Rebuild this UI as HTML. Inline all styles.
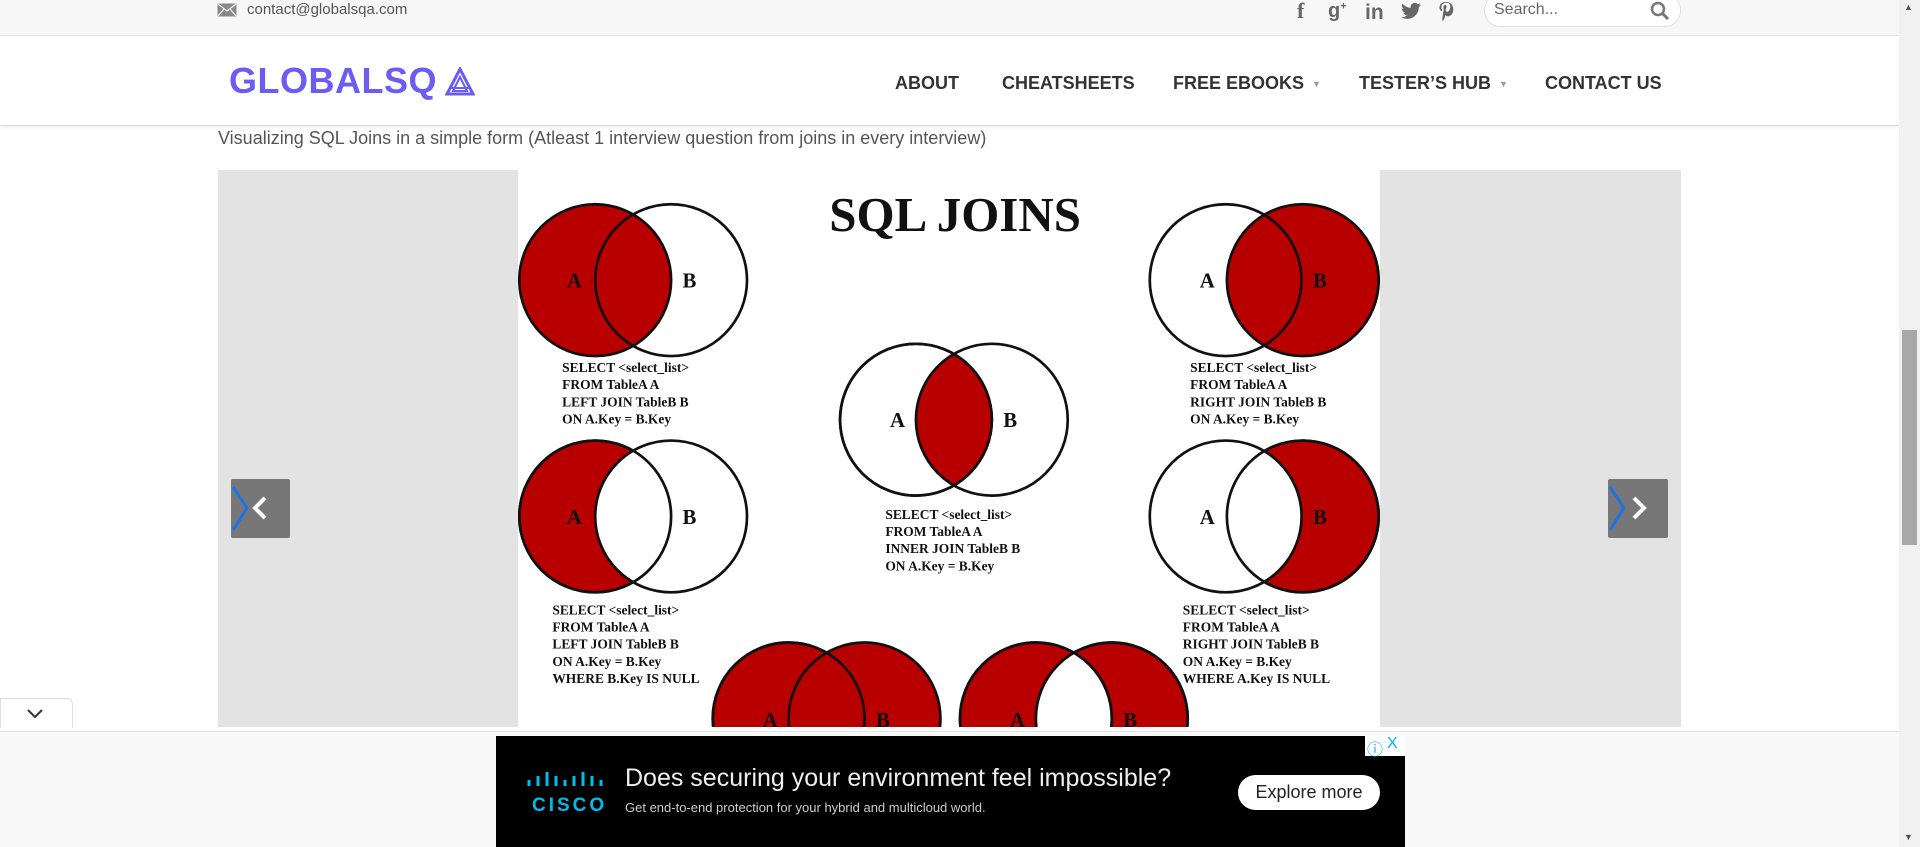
<!DOCTYPE html>
<html><head><meta charset="utf-8"><style>
*{margin:0;padding:0;box-sizing:border-box}
body{width:1920px;height:847px;overflow:hidden;background:#fff;font-family:"Liberation Sans",sans-serif;position:relative}
.abs{position:absolute}
#top{left:0;top:0;width:1899px;height:36px;background:#f7f7f7;border-bottom:1px solid #e6e6e6}
#hdr{left:0;top:36px;width:1899px;height:90px;background:#fff;border-bottom:1px solid #ddd;box-shadow:0 1px 3px rgba(0,0,0,.08)}
.nav{top:73px;font-size:18px;color:#333;font-weight:600;letter-spacing:0}
.caret{font-size:9px;color:#999;margin-left:8px;vertical-align:middle}
.sql{font-family:"Liberation Serif",serif;font-weight:bold;fill:#111}
</style></head><body>
<div id="top" class="abs"></div>
<svg class="abs" style="left:217px;top:3px" width="20" height="14" viewBox="0 0 20 14"><rect x="0.5" y="0.5" width="19" height="13" fill="#888"/><path d="M1 1 L10 8 L19 1 M1 13 L7 6 M19 13 L13 6" stroke="#f7f7f7" stroke-width="1.2" fill="none"/></svg>
<div class="abs" style="left:247px;top:1px;font-size:15px;color:#555">contact@globalsqa.com</div>
<div class="abs" style="left:1297px;top:-2px;font-size:22px;color:#666;font-weight:bold;font-family:'Liberation Serif',serif">f</div>
<div class="abs" style="left:1328px;top:0px;font-size:20px;color:#666;font-weight:bold">g<sup style="font-size:11px">+</sup></div>
<div class="abs" style="left:1365px;top:1px;font-size:21px;color:#666;font-weight:bold">in</div>
<svg class="abs" style="left:1400px;top:3px" width="22" height="18" viewBox="0 0 24 20"><path d="M23 2c-.8.4-1.7.6-2.6.7.9-.6 1.6-1.4 2-2.5-.9.5-1.900.9-2.9 1.1A4.5 4.5 0 0 0 11.8 5.4 12.8 12.8 0 0 1 2.5 0.7a4.5 4.5 0 0 0 1.4 6c-.7 0-1.4-.2-2-.6 0 2.2 1.6 4 3.6 4.4-.7.2-1.4.2-2 .1.6 1.8 2.2 3.1 4.2 3.1A9 9 0 0 1 1 15.6 12.8 12.8 0 0 0 20.7 4.8c.9-.7 1.7-1.500 2.3-2.8z" fill="#666"/></svg>
<svg class="abs" style="left:1438px;top:1px" width="16" height="21" viewBox="0 0 16 21"><path d="M8 1C3.5 1 1.5 4 1.5 6.5c0 1.6.6 3 1.9 3.5.2.1.4 0 .5-.3l.2-.8c.1-.3 0-.4-.2-.6-.4-.5-.6-1.1-.6-1.9 0-2.5 1.9-4.7 4.9-4.7 2.7 0 4.1 1.6 4.1 3.8 0 2.9-1.3 5.3-3.1 5.3-1 0-1.8-.8-1.5-1.9.3-1.3.9-2.6.9-3.5 0-.8-.4-1.4-1.3-1.4-1 0-1.9 1.1-1.9 2.5 0 .9.3 1.5.3 1.5L4.5 16c-.4 1.5-.1 3.5 0 4 .1.1.2.2.3 0 .1-.2 1.4-1.7 1.8-3.3l.7-2.7c.3.7 1.4 1.3 2.5 1.3 3.3 0 5.5-3 5.5-7C15.3 4.4 12.6 1 8 1z" fill="#666"/></svg>
<div class="abs" style="left:1484px;top:-6px;width:197px;height:33px;background:#fff;border:1px solid #e0e0e0;border-radius:16px"></div>
<div class="abs" style="left:1494px;top:1px;font-size:16px;color:#666">Search...</div>
<svg class="abs" style="left:1650px;top:1px" width="20" height="20" viewBox="0 0 20 20"><circle cx="8" cy="8" r="6" stroke="#777" stroke-width="2.5" fill="none"/><path d="M12.5 12.5 L18 18" stroke="#777" stroke-width="3"/></svg>

<div id="hdr" class="abs"></div>
<div class="abs" style="left:229px;top:60px;font-size:36px;font-weight:900;color:#6a5cf5;letter-spacing:0.5px">GLOBALSQ</div>
<svg class="abs" style="left:445px;top:67px" width="30" height="30" viewBox="0 0 30 30"><path d="M15 2 L28 27 L2 27 Z" fill="none" stroke="#6a5cf5" stroke-width="3"/><path d="M15 10 L22 24 L8 24 Z" fill="none" stroke="#6a5cf5" stroke-width="2"/><path d="M5 21 H25" stroke="#6a5cf5" stroke-width="2"/></svg>
<div class="abs nav" style="left:895px">ABOUT</div>
<div class="abs nav" style="left:1002px">CHEATSHEETS</div>
<div class="abs nav" style="left:1173px">FREE EBOOKS<span class="caret">▼</span></div>
<div class="abs nav" style="left:1359px">TESTER’S HUB<span class="caret">▼</span></div>
<div class="abs nav" style="left:1545px">CONTACT US</div>

<div class="abs" style="left:218px;top:128px;font-size:18px;color:#555">Visualizing SQL Joins in a simple form (Atleast 1 interview question from joins in every interview)</div>

<div class="abs" style="left:218px;top:170px;width:1463px;height:557px;background:#e3e3e3"></div>
<svg class="abs" style="left:518px;top:170px" width="862" height="557" viewBox="0 0 704 455">
<defs>
<clipPath id="cc"><circle cx="387" cy="204" r="62"/></clipPath>
<clipPath id="cb5"><circle cx="485" cy="448" r="62"/></clipPath>
</defs>
<rect width="704" height="455" fill="#fff"/>
<text x="357" y="50" text-anchor="middle" class="sql" font-size="40">SQL JOINS</text>
<g stroke="#111" stroke-width="2.2">
<circle cx="63" cy="90" r="62" fill="#b80000"/><circle cx="125" cy="90" r="62" fill="none"/>
<circle cx="641" cy="90" r="62" fill="#b80000"/><circle cx="578" cy="90" r="62" fill="none"/>
<circle cx="325" cy="204" r="62" fill="#fff"/><circle cx="325" cy="204" r="62" fill="#b80000" clip-path="url(#cc)" stroke="none"/><circle cx="325" cy="204" r="62" fill="none"/><circle cx="387" cy="204" r="62" fill="none"/>
<circle cx="63" cy="283" r="62" fill="#b80000"/><circle cx="125" cy="283" r="62" fill="#fff"/><circle cx="63" cy="283" r="62" fill="none"/>
<circle cx="641" cy="283" r="62" fill="#b80000"/><circle cx="578" cy="283" r="62" fill="#fff"/><circle cx="641" cy="283" r="62" fill="none"/>
<circle cx="221" cy="448" r="62" fill="#b80000"/><circle cx="283" cy="448" r="62" fill="#b80000"/><circle cx="221" cy="448" r="62" fill="none"/>
<circle cx="423" cy="448" r="62" fill="#b80000"/><circle cx="485" cy="448" r="62" fill="#b80000"/><circle cx="423" cy="448" r="62" fill="#fff" clip-path="url(#cb5)"/><circle cx="423" cy="448" r="62" fill="none"/><circle cx="485" cy="448" r="62" fill="none"/>
</g>
<g class="sql" font-size="17" text-anchor="middle">
<text x="46" y="96">A</text><text x="140" y="96">B</text>
<text x="563" y="96">A</text><text x="655" y="96">B</text>
<text x="310" y="210">A</text><text x="402" y="210">B</text>
<text x="46" y="289">A</text><text x="140" y="289">B</text>
<text x="563" y="289">A</text><text x="655" y="289">B</text>
<text x="206" y="455">A</text><text x="298" y="455">B</text>
<text x="408" y="455">A</text><text x="500" y="455">B</text>
</g>
<g class="sql" font-size="11">
<text x="36" y="165">SELECT &lt;select_list&gt;</text><text x="36" y="179">FROM TableA A</text><text x="36" y="193">LEFT JOIN TableB B</text><text x="36" y="207">ON A.Key = B.Key</text>
<text x="549" y="165">SELECT &lt;select_list&gt;</text><text x="549" y="179">FROM TableA A</text><text x="549" y="193">RIGHT JOIN TableB B</text><text x="549" y="207">ON A.Key = B.Key</text>
<text x="300" y="285">SELECT &lt;select_list&gt;</text><text x="300" y="299">FROM TableA A</text><text x="300" y="313">INNER JOIN TableB B</text><text x="300" y="327">ON A.Key = B.Key</text>
<text x="28" y="363">SELECT &lt;select_list&gt;</text><text x="28" y="377">FROM TableA A</text><text x="28" y="391">LEFT JOIN TableB B</text><text x="28" y="405">ON A.Key = B.Key</text><text x="28" y="419">WHERE B.Key IS NULL</text>
<text x="543" y="363">SELECT &lt;select_list&gt;</text><text x="543" y="377">FROM TableA A</text><text x="543" y="391">RIGHT JOIN TableB B</text><text x="543" y="405">ON A.Key = B.Key</text><text x="543" y="419">WHERE A.Key IS NULL</text>
</g>
</svg>
<div class="abs" style="left:231px;top:479px;width:59px;height:59px;background:#777;border-radius:2px"></div>
<svg class="abs" style="left:231px;top:479px" width="59" height="59" viewBox="0 0 59 59"><path d="M2 8 L16 29 L2 51" stroke="#1a73e8" stroke-width="3" fill="none"/><path d="M34 19 L24 29 L34 39" stroke="#fff" stroke-width="4" fill="none"/></svg>
<div class="abs" style="left:1608px;top:479px;width:60px;height:59px;background:#777;border-radius:2px"></div>
<svg class="abs" style="left:1608px;top:479px" width="60" height="59" viewBox="0 0 60 59"><path d="M2 8 L16 29 L2 51" stroke="#1a73e8" stroke-width="3" fill="none"/><path d="M26 19 L36 29 L26 39" stroke="#fff" stroke-width="4" fill="none"/></svg>

<div class="abs" style="left:0;top:698px;width:73px;height:30px;background:#fff;border:1px solid #ddd;border-bottom:none;border-radius:0 6px 0 0"></div>
<svg class="abs" style="left:25px;top:706px" width="20" height="14" viewBox="0 0 20 14"><path d="M3 4 L10 11 L17 4" stroke="#333" stroke-width="2" fill="none"/></svg>

<div class="abs" style="left:0;top:731px;width:1899px;height:116px;background:#f8f8f8;border-top:1px solid #e2e2e2"></div>
<div class="abs" style="left:496px;top:736px;width:909px;height:111px;background:#000"></div>
<div class="abs" style="left:1365px;top:736px;width:40px;height:20px;background:#fff"></div>
<div class="abs" style="left:1367px;top:736px;font-size:16px;color:#00aeef">ⓘ</div>
<div class="abs" style="left:1387px;top:735px;font-size:16px;color:#00aeef">X</div>
<svg class="abs" style="left:527px;top:771px" width="78" height="22" viewBox="0 0 78 22"><g stroke="#00bceb" stroke-width="3"><path d="M2 9v6M11 5v10M20 1v14M29 5v10M38 9v6M47 5v10M56 1v14M65 5v10M74 9v6"/></g></svg>
<div class="abs" style="left:532px;top:795px;font-size:19px;font-weight:bold;color:#00bceb;letter-spacing:3px">CISCO</div>
<div class="abs" style="left:625px;top:764px;font-size:25px;color:#eee">Does securing your environment feel impossible?</div>
<div class="abs" style="left:625px;top:800px;font-size:13px;color:#ccc">Get end-to-end protection for your hybrid and multicloud world.</div>
<div class="abs" style="left:1238px;top:775px;width:142px;height:35px;background:#fff;border-radius:18px;font-size:18px;color:#222;text-align:center;line-height:35px">Explore more</div>

<div class="abs" style="left:1899px;top:0;width:21px;height:847px;background:#f1f1f1"></div>
<div class="abs" style="left:1902px;top:330px;width:15px;height:215px;background:#a8a8a8"></div>
<div class="abs" style="left:1904px;top:2px;font-size:9px;color:#555">▲</div>
<div class="abs" style="left:1904px;top:832px;font-size:9px;color:#555">▼</div>
</body></html>
